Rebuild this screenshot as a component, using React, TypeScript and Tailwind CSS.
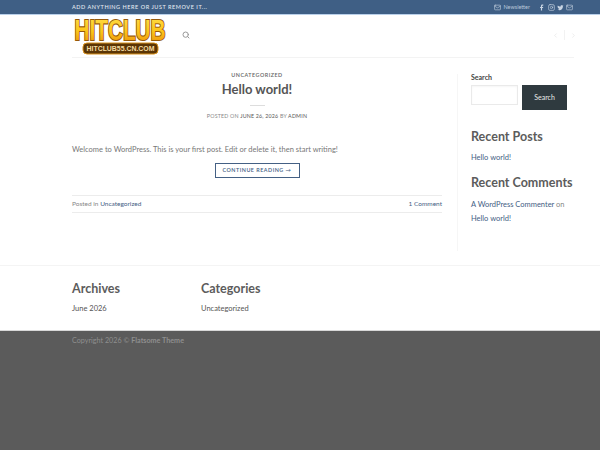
import type React from "react";
import { Search, Mail, Instagram, Twitter, Facebook, ChevronLeft, ChevronRight } from "lucide-react";

const Logo = () => (
  <svg width="96" height="40" viewBox="0 0 96 40" className="block overflow-visible">
    <defs>
      <linearGradient id="gold" x1="0" y1="0" x2="0" y2="1">
        <stop offset="0" stopColor="#ffe14d" />
        <stop offset="0.55" stopColor="#fcc419" />
        <stop offset="1" stopColor="#e88a0c" />
      </linearGradient>
    </defs>
    <text
      x="48"
      y="24"
      textAnchor="middle"
      fontFamily="'Liberation Sans', sans-serif"
      fontWeight="700"
      fontSize="29"
      textLength="91"
      lengthAdjust="spacingAndGlyphs"
      fill="url(#gold)"
      stroke="#96590a"
      strokeWidth="2.2"
      paintOrder="stroke"
    >
      HITCLUB
    </text>
    <rect x="11" y="27" width="75" height="11" rx="4" fill="#5a3506" stroke="#d9921c" strokeWidth="1" />
    <text
      x="48.5"
      y="35.3"
      textAnchor="middle"
      fontFamily="'Liberation Sans', sans-serif"
      fontWeight="700"
      fontSize="7.5"
      textLength="68"
      lengthAdjust="spacingAndGlyphs"
      fill="#f5dca0"
    >
      HITCLUB55.CN.COM
    </text>
  </svg>
);

const WidgetTitle = ({ children }: { children: React.ReactNode }) => (
  <h4 className="text-[12.5px] leading-[16px] font-bold text-[#5c5c5c] whitespace-nowrap">{children}</h4>
);

export default function App() {
  return (
    <div className="min-h-[450px] flex flex-col bg-white font-['Lato','Liberation_Sans',sans-serif] text-[#777]">
      {/* Top bar */}
      <div className="h-[15px] shrink-0 bg-[#3f5f85] border-b border-[#b9d0ea] pl-[72px] pr-[27px] flex items-center justify-between">
        <span className="text-[5.5px] font-medium tracking-[0.55px] text-[#e4eaf2]">ADD ANYTHING HERE OR JUST REMOVE IT...</span>
        <div className="flex items-center text-[#c9d5e3]">
          <Mail size={7} className="mr-[2px]" />
          <span className="text-[5.5px] mr-[8px] text-[#b8c7d9]">Newsletter</span>
          <Facebook size={7} className="mr-[3px]" fill="currentColor" strokeWidth={0} />
          <Instagram size={7} className="mr-[2px]" />
          <Twitter size={7} className="mr-[2px]" fill="currentColor" strokeWidth={0} />
          <Mail size={7} />
        </div>
      </div>

      {/* Header */}
      <div className="ml-[72px] mr-[26px] h-[43px] shrink-0 border-b border-[#f3f3f3] flex items-center justify-between">
        <div className="flex items-center">
          <Logo />
          <Search size={8} strokeWidth={3} className="ml-[14px] -mt-[2px] text-[#999]" />
        </div>
        <div className="flex items-center text-[#e2e2e2] mr-[-3px] gap-[5px] -mt-[2px]">
          <ChevronLeft size={7} />
          <span className="w-px h-[10px] bg-[#f2f2f2]" />
          <ChevronRight size={7} />
        </div>
      </div>

      {/* Main */}
      <div className="flex pl-[72px] pr-[26px] h-[208px] shrink-0 border-b border-[#f4f4f4] pt-[16px]">
        <div className="w-[370px] shrink-0 flex flex-col">
          <div className="text-center text-[5.4px] leading-[7px] tracking-[0.5px] font-semibold text-[#666] mt-[-2px]">UNCATEGORIZED</div>
          <h1 className="text-center text-[13px] leading-[18px] font-bold text-[#555] mt-[1px]">Hello world!</h1>
          <div className="w-[15px] h-px bg-[#ddd] mx-auto mt-[7px]" />
          <div className="text-center text-[5.3px] leading-[7px] tracking-[0.2px] text-[#888] mt-[7px]">
            POSTED ON <span className="text-[#555]">JUNE 26, 2026</span> BY <span className="text-[#555]">ADMIN</span>
          </div>
          <p className="text-[7.5px] leading-[11px] text-[#777] mt-[24px]">
            Welcome to WordPress. This is your first post. Edit or delete it, then start writing!
          </p>
          <div className="flex justify-center mt-[8px]">
            <span className="w-[85px] h-[15px] border border-[#446084] flex items-center justify-center text-[5.4px] tracking-[0.5px] font-semibold text-[#446084]">
              CONTINUE READING →
            </span>
          </div>
          <div className="mt-[17px] h-[18px] border-y border-[#ececec] flex items-center justify-between text-[6.5px]">
            <span className="text-[#888]">
              Posted in <span className="text-[#446084]">Uncategorized</span>
            </span>
            <span className="text-[#446084]">1 Comment</span>
          </div>
        </div>

        <aside className="ml-[15px] pl-[13px] w-[118px] h-[177px] border-l border-[#f6f6f6]">
          <div className="text-[7px] leading-[9px] font-bold text-[#444] -mt-[1px]">Search</div>
          <div className="flex mt-[3px] items-start">
            <div className="w-[47px] h-[20px] border border-[#eaeaea] bg-white shadow-[inset_0_1px_2px_rgba(0,0,0,0.04)]" />
            <div className="ml-[4px] w-[45px] h-[25px] bg-[#2f3a3f] text-[#e8e8e8] text-[7px] flex items-center justify-center">Search</div>
          </div>
          <div className="mt-[19px]"><WidgetTitle>Recent Posts</WidgetTitle></div>
          <div className="text-[7.5px] leading-[10px] text-[#446084] mt-[8px]">Hello world!</div>
          <div className="mt-[12px]"><WidgetTitle>Recent Comments</WidgetTitle></div>
          <div className="text-[7.5px] leading-[14px] text-[#446084] mt-[7px]">
            A WordPress Commenter <span className="text-[#888]">on</span>
            <br />
            Hello world!
          </div>
        </aside>
      </div>

      {/* Footer widgets */}
      <div className="h-[64px] shrink-0 pl-[72px] pt-[15px] flex">
        <div className="w-[129px]">
          <WidgetTitle>Archives</WidgetTitle>
          <div className="text-[7.5px] leading-[10px] text-[#555] mt-[7px]">June 2026</div>
        </div>
        <div>
          <WidgetTitle>Categories</WidgetTitle>
          <div className="text-[7.5px] leading-[10px] text-[#555] mt-[7px]">Uncategorized</div>
        </div>
      </div>

      {/* Absolute footer */}
      <div className="flex-1 bg-[#5b5b5b] border-t border-[#d8d8d8] pl-[72px] pt-[5px]">
        <span className="text-[7.2px] leading-[10px] text-[#8f8f8f] block">
          Copyright 2026 © <span className="font-bold">Flatsome Theme</span>
        </span>
      </div>
    </div>
  );
}
